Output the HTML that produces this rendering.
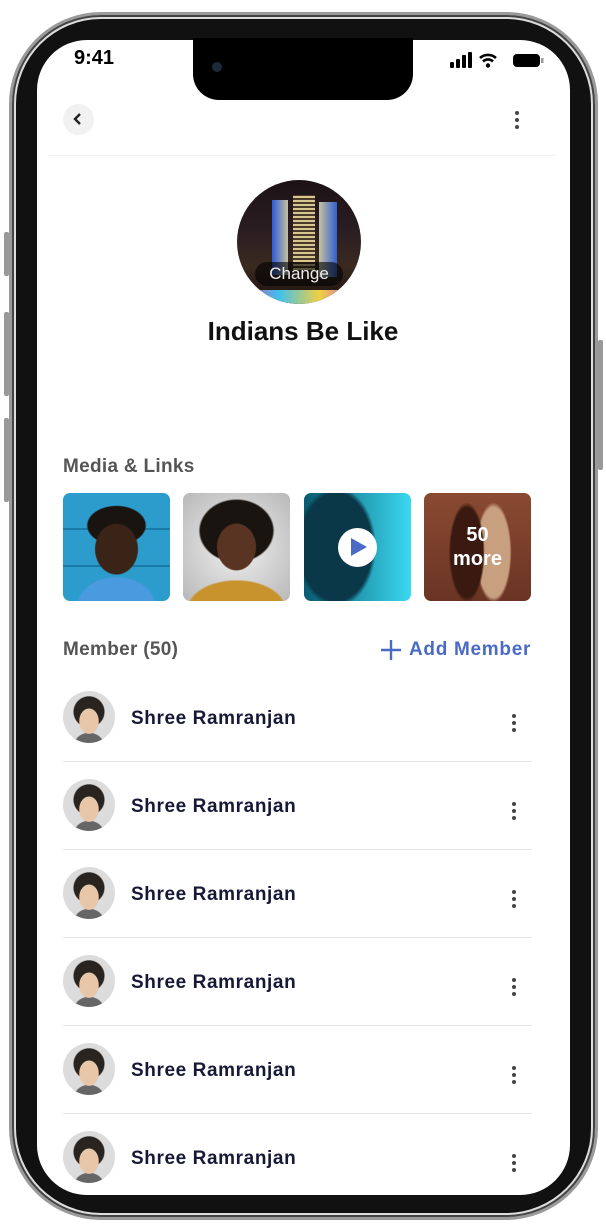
<!DOCTYPE html>
<html><head><meta charset="utf-8">
<style>
*{margin:0;padding:0;box-sizing:border-box}
body{width:606px;height:1227px;background:#fff;position:relative;overflow:hidden;font-family:"Liberation Sans",sans-serif}
.a{position:absolute}
.frame{left:9px;top:12px;width:589px;height:1208px;border-radius:92px;background:#111;border:3px solid #9a9a9a;box-shadow:inset 0 0 0 2px #444,inset 0 0 0 4px #ddd}
.screen{left:37px;top:40px;width:533px;height:1155px;border-radius:50px;background:#fff;overflow:hidden}
.btn{background:#999;border-radius:2px;width:5px}
.notch{left:193px;top:38px;width:220px;height:62px;background:#000;border-radius:0 0 26px 26px}
.name{font-weight:bold;font-size:19px;color:#161838;letter-spacing:.6px}
.dots{width:4px}
.dots i{display:block;width:4px;height:4px;border-radius:50%;background:#444;margin-bottom:3px}
.sep{left:63px;width:469px;height:1px;background:#e6e6e6}
.av{width:52px;height:52px;border-radius:50%;background:radial-gradient(ellipse 10px 13px at 50% 58%,#e8c6a8 95%,transparent),radial-gradient(circle at 50% 40%,#2a2420 0 15px,transparent 16px),radial-gradient(circle at 50% 112%,#666 0 16px,transparent 17px),#dcdcdc}
.tile{top:493px;width:107px;height:108px;border-radius:7px;overflow:hidden}
</style></head><body>
<div class="a btn" style="left:4px;top:232px;height:44px"></div>
<div class="a btn" style="left:4px;top:312px;height:84px"></div>
<div class="a btn" style="left:4px;top:418px;height:84px"></div>
<div class="a btn" style="left:598px;top:340px;height:130px"></div>
<div class="a frame"></div>
<div class="a screen"></div>
<div class="a notch"></div>
<div class="a" style="left:212px;top:62px;width:10px;height:10px;border-radius:50%;background:#1a2a3a"></div>
<div class="a" style="left:74px;top:47px;font-size:20px;font-weight:bold;color:#000">9:41</div>
<svg class="a" style="left:450px;top:51px" width="100" height="18" viewBox="0 0 100 18">
<rect x="0" y="11" width="4" height="6" rx="1" fill="#000"/><rect x="6" y="8" width="4" height="9" rx="1" fill="#000"/><rect x="12" y="4" width="4" height="13" rx="1" fill="#000"/><rect x="18" y="1" width="4" height="16" rx="1" fill="#000"/>
<path d="M30 7a12 12 0 0 1 16 0M33 10.5a7 7 0 0 1 10 0" stroke="#000" stroke-width="2.6" fill="none"/><circle cx="38" cy="14.5" r="2.2" fill="#000"/>
<rect x="63" y="3" width="27" height="13" rx="4" fill="#000"/><rect x="91" y="7" width="2.5" height="5" fill="#999"/>
</svg>
<div class="a" style="left:63px;top:104px;width:31px;height:31px;border-radius:50%;background:#f1f1f1"></div>
<svg class="a" style="left:72px;top:112px" width="12" height="14"><path d="M8 2L3 7l5 5" stroke="#222" stroke-width="2.4" fill="none"/></svg>
<div class="a dots" style="left:515px;top:111px"><i></i><i></i><i></i></div>
<div class="a" style="left:48px;top:155px;width:508px;height:1px;background:#f0f0f0"></div>
<div class="a" style="left:237px;top:180px;width:124px;height:124px;border-radius:50%;overflow:hidden;background:linear-gradient(180deg,#1c1216 0%,#2a1d22 40%,#3a2a20 70%,#1a1010 100%)">
<div class="a" style="left:35px;top:20px;width:16px;height:75px;background:linear-gradient(90deg,#2a5ad8,#c8c0a0)"></div>
<div class="a" style="left:56px;top:15px;width:22px;height:75px;background:repeating-linear-gradient(0deg,#d8c890 0 2px,#4a3a2a 2px 4px)"></div>
<div class="a" style="left:82px;top:22px;width:18px;height:75px;background:linear-gradient(90deg,#c8c0a0,#3060d0)"></div>
<div class="a" style="left:0;top:110px;width:124px;height:14px;background:linear-gradient(90deg,#e040a0,#40c0f0,#f0d040,#d040f0)"></div>
<div class="a" style="left:18px;top:82px;width:88px;height:24px;border-radius:12px;background:rgba(0,0,0,.6);color:#eee;font-size:17px;text-align:center;line-height:24px">Change</div>
</div>
<div class="a" style="left:0;width:606px;top:316px;text-align:center;font-size:26px;font-weight:bold;color:#111">Indians Be Like</div>
<div class="a" style="left:63px;top:456px;font-size:19px;font-weight:bold;color:#555;letter-spacing:.3px">Media &amp; Links</div>
<div class="a tile" style="left:63px;background:radial-gradient(ellipse 22px 26px at 50% 52%,#3a2418 95%,transparent),radial-gradient(ellipse 30px 20px at 50% 30%,#1a1410 95%,transparent),radial-gradient(ellipse 40px 30px at 50% 105%,#4a9ae0 95%,transparent),repeating-linear-gradient(180deg,#2c9ccc 0 35px,#1a7aa8 35px 37px)"></div>
<div class="a tile" style="left:183px;background:radial-gradient(ellipse 20px 24px at 50% 50%,#5a3422 95%,transparent),radial-gradient(ellipse 38px 32px at 50% 35%,#1a1410 95%,transparent),radial-gradient(ellipse 50px 30px at 50% 108%,#c8922c 95%,transparent),radial-gradient(circle,#f0f0f0,#b8b8b8)"></div>
<div class="a tile" style="left:304px;background:radial-gradient(ellipse 40px 60px at 30% 50%,#0a3848 90%,transparent),linear-gradient(90deg,#0a5a70,#3ad8f0)">
<div class="a" style="left:34px;top:35px;width:39px;height:39px;border-radius:50%;background:#fff"></div>
<svg class="a" style="left:46px;top:44px" width="18" height="20"><path d="M1 1L17 10L1 19Z" fill="#4a6bc5"/></svg></div>
<div class="a tile" style="left:424px;background:radial-gradient(ellipse 18px 50px at 40% 55%,#3a1a10 90%,transparent),radial-gradient(ellipse 18px 50px at 65% 55%,#c8a080 90%,transparent),linear-gradient(#8a4a32,#6a3424)">
<div class="a" style="left:0;top:30px;width:107px;text-align:center;color:#fff;font-size:20px;font-weight:bold;line-height:24px">50<br>more</div></div>
<div class="a" style="left:63px;top:639px;font-size:19px;font-weight:bold;color:#555;letter-spacing:.3px">Member (50)</div>
<svg class="a" style="left:380px;top:639px" width="22" height="22"><path d="M11 1V21M1 11H21" stroke="#4a6bc5" stroke-width="2.4"/></svg>
<div class="a" style="left:409px;top:639px;font-size:19px;font-weight:bold;color:#4a6bc5;letter-spacing:.7px">Add Member</div>

<div class="a av" style="left:63px;top:691px"></div><div class="a name" style="left:131px;top:708px">Shree Ramranjan</div><div class="a dots" style="left:512px;top:714px"><i></i><i></i><i></i></div><div class="a sep" style="top:761px"></div>
<div class="a av" style="left:63px;top:779px"></div><div class="a name" style="left:131px;top:796px">Shree Ramranjan</div><div class="a dots" style="left:512px;top:802px"><i></i><i></i><i></i></div><div class="a sep" style="top:849px"></div>
<div class="a av" style="left:63px;top:867px"></div><div class="a name" style="left:131px;top:884px">Shree Ramranjan</div><div class="a dots" style="left:512px;top:890px"><i></i><i></i><i></i></div><div class="a sep" style="top:937px"></div>
<div class="a av" style="left:63px;top:955px"></div><div class="a name" style="left:131px;top:972px">Shree Ramranjan</div><div class="a dots" style="left:512px;top:978px"><i></i><i></i><i></i></div><div class="a sep" style="top:1025px"></div>
<div class="a av" style="left:63px;top:1043px"></div><div class="a name" style="left:131px;top:1060px">Shree Ramranjan</div><div class="a dots" style="left:512px;top:1066px"><i></i><i></i><i></i></div><div class="a sep" style="top:1113px"></div>
<div class="a av" style="left:63px;top:1131px"></div><div class="a name" style="left:131px;top:1148px">Shree Ramranjan</div><div class="a dots" style="left:512px;top:1154px"><i></i><i></i><i></i></div>
</body></html>
